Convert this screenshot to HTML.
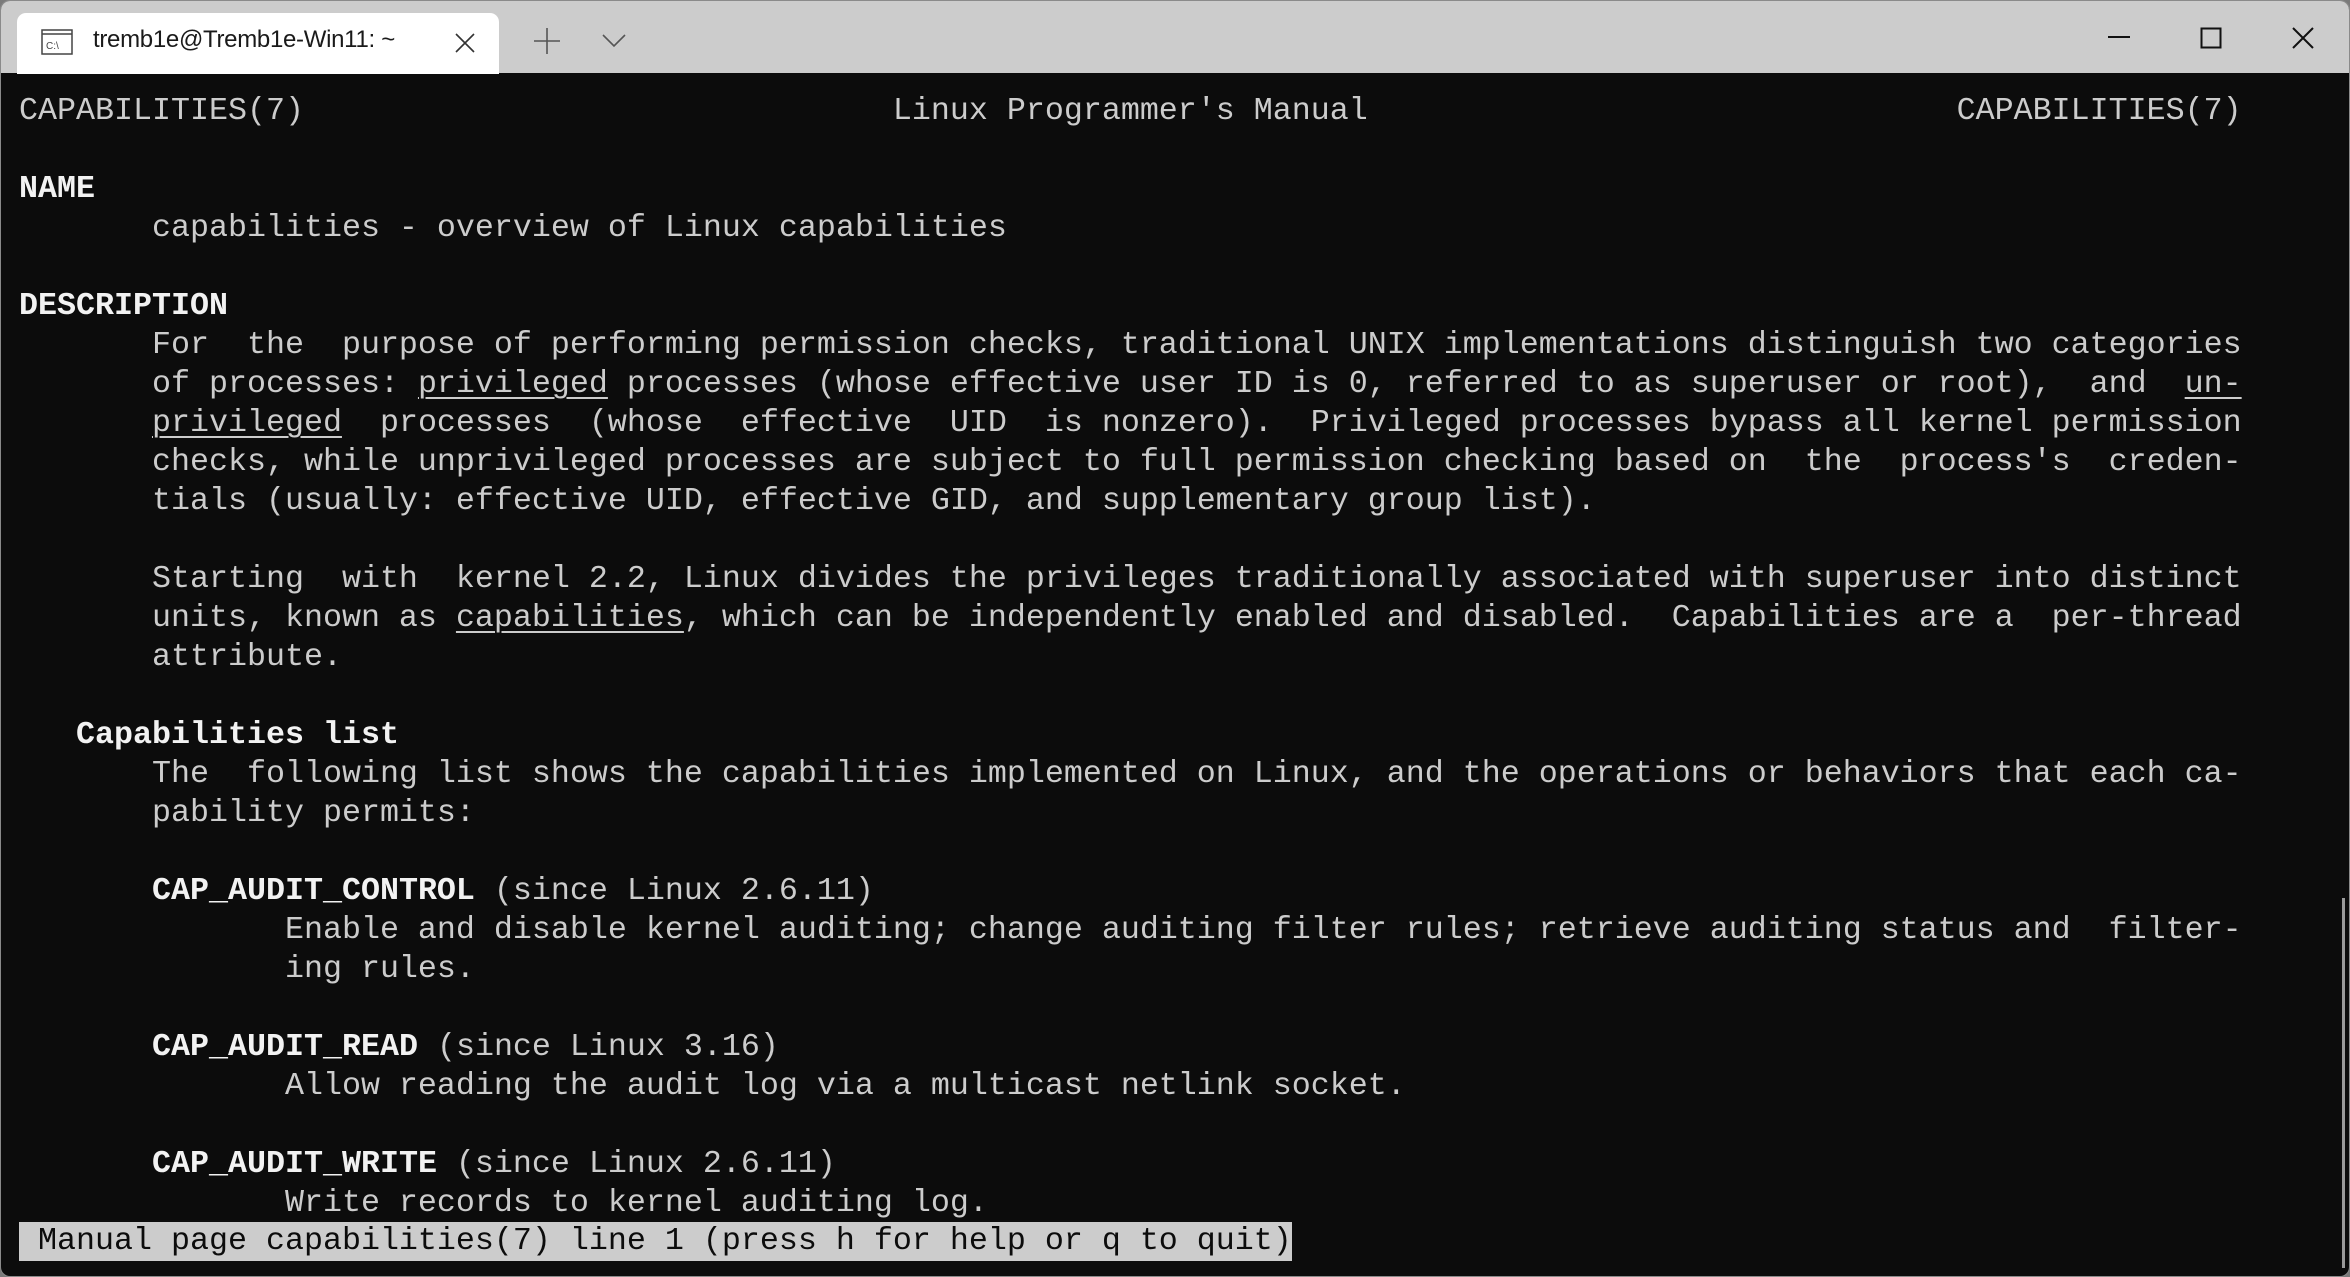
<!DOCTYPE html>
<html><head><meta charset="utf-8"><style>
html,body{margin:0;padding:0;width:2350px;height:1277px;overflow:hidden;background:#7a7a7a}
#win{position:absolute;left:0;top:0;width:2348px;height:1275px;border:1px solid #8a8a8a;border-radius:10px;background:#0c0c0c;overflow:hidden}
#tb{position:absolute;left:0;top:0;width:2350px;height:72px;background:#cccccc}
#tab{position:absolute;left:16px;top:12px;width:482px;height:61px;background:#fff;border-radius:9px 9px 0 0}
#tabt{position:absolute;left:76px;top:13px;font:24px "Liberation Sans",sans-serif;color:#1a1a1a;letter-spacing:-0.3px}
.r{position:absolute;left:18px;height:39px;line-height:39px;white-space:pre;font-family:"Liberation Mono",monospace;font-size:31.67px;color:#cccccc}
b{color:#f2f2f2}
u{text-decoration-thickness:2px;text-underline-offset:5px}
#st{background:#cccccc;color:#0c0c0c;left:18px}
</style></head><body><div id="win">
<div id="tb">
<div id="tab">
<svg style="position:absolute;left:24px;top:16px" width="32" height="26" viewBox="0 0 32 26"><rect x="1" y="1" width="30" height="24" fill="none" stroke="#444" stroke-width="1.5"/><line x1="1" y1="5" x2="31" y2="5" stroke="#444" stroke-width="1.5"/><text x="5" y="20" font-size="10" font-family="Liberation Sans" fill="#444">C:\</text></svg>
<div id="tabt">tremb1e@Tremb1e-Win11: ~</div>
<svg style="position:absolute;left:436px;top:18px" width="24" height="24"><path d="M3 3L21 21M21 3L3 21" stroke="#333" stroke-width="1.6"/></svg>
</div>
<svg style="position:absolute;left:532px;top:26px" width="28" height="28"><path d="M14 1V27M1 14H27" stroke="#555" stroke-width="1.6"/></svg>
<svg style="position:absolute;left:600px;top:32px" width="26" height="16"><path d="M2 2L13 13L24 2" fill="none" stroke="#555" stroke-width="1.6"/></svg>
<svg style="position:absolute;left:2106px;top:34px" width="24" height="4"><path d="M1 2H23" stroke="#111" stroke-width="2"/></svg>
<svg style="position:absolute;left:2199px;top:26px" width="22" height="22"><rect x="1.5" y="1.5" width="19" height="19" fill="none" stroke="#111" stroke-width="2"/></svg>
<svg style="position:absolute;left:2290px;top:25px" width="24" height="24"><path d="M2 2L22 22M22 2L2 22" stroke="#111" stroke-width="2"/></svg>
</div>
<div class="r" style="top:91px">CAPABILITIES(7)                               Linux Programmer's Manual                               CAPABILITIES(7)</div>
<div class="r" style="top:169px"><b>NAME</b></div>
<div class="r" style="top:208px">       capabilities - overview of Linux capabilities</div>
<div class="r" style="top:286px"><b>DESCRIPTION</b></div>
<div class="r" style="top:325px">       For  the  purpose of performing permission checks, traditional UNIX implementations distinguish two categories</div>
<div class="r" style="top:364px">       of processes: <u>privileged</u> processes (whose effective user ID is 0, referred to as superuser or root),  and  <u>un-</u></div>
<div class="r" style="top:403px">       <u>privileged</u>  processes  (whose  effective  UID  is nonzero).  Privileged processes bypass all kernel permission</div>
<div class="r" style="top:442px">       checks, while unprivileged processes are subject to full permission checking based on  the  process's  creden-</div>
<div class="r" style="top:481px">       tials (usually: effective UID, effective GID, and supplementary group list).</div>
<div class="r" style="top:559px">       Starting  with  kernel 2.2, Linux divides the privileges traditionally associated with superuser into distinct</div>
<div class="r" style="top:598px">       units, known as <u>capabilities</u>, which can be independently enabled and disabled.  Capabilities are a  per-thread</div>
<div class="r" style="top:637px">       attribute.</div>
<div class="r" style="top:715px">   <b>Capabilities list</b></div>
<div class="r" style="top:754px">       The  following list shows the capabilities implemented on Linux, and the operations or behaviors that each ca-</div>
<div class="r" style="top:793px">       pability permits:</div>
<div class="r" style="top:871px">       <b>CAP_AUDIT_CONTROL</b> (since Linux 2.6.11)</div>
<div class="r" style="top:910px">              Enable and disable kernel auditing; change auditing filter rules; retrieve auditing status and  filter-</div>
<div class="r" style="top:949px">              ing rules.</div>
<div class="r" style="top:1027px">       <b>CAP_AUDIT_READ</b> (since Linux 3.16)</div>
<div class="r" style="top:1066px">              Allow reading the audit log via a multicast netlink socket.</div>
<div class="r" style="top:1144px">       <b>CAP_AUDIT_WRITE</b> (since Linux 2.6.11)</div>
<div class="r" style="top:1183px">              Write records to kernel auditing log.</div>
<div class="r" id="st" style="top:1221px"> Manual page capabilities(7) line 1 (press h for help or q to quit)</div>
<div style="position:absolute;left:2341px;top:897px;width:3px;height:370px;background:#9a9a9a"></div>
</div></body></html>
